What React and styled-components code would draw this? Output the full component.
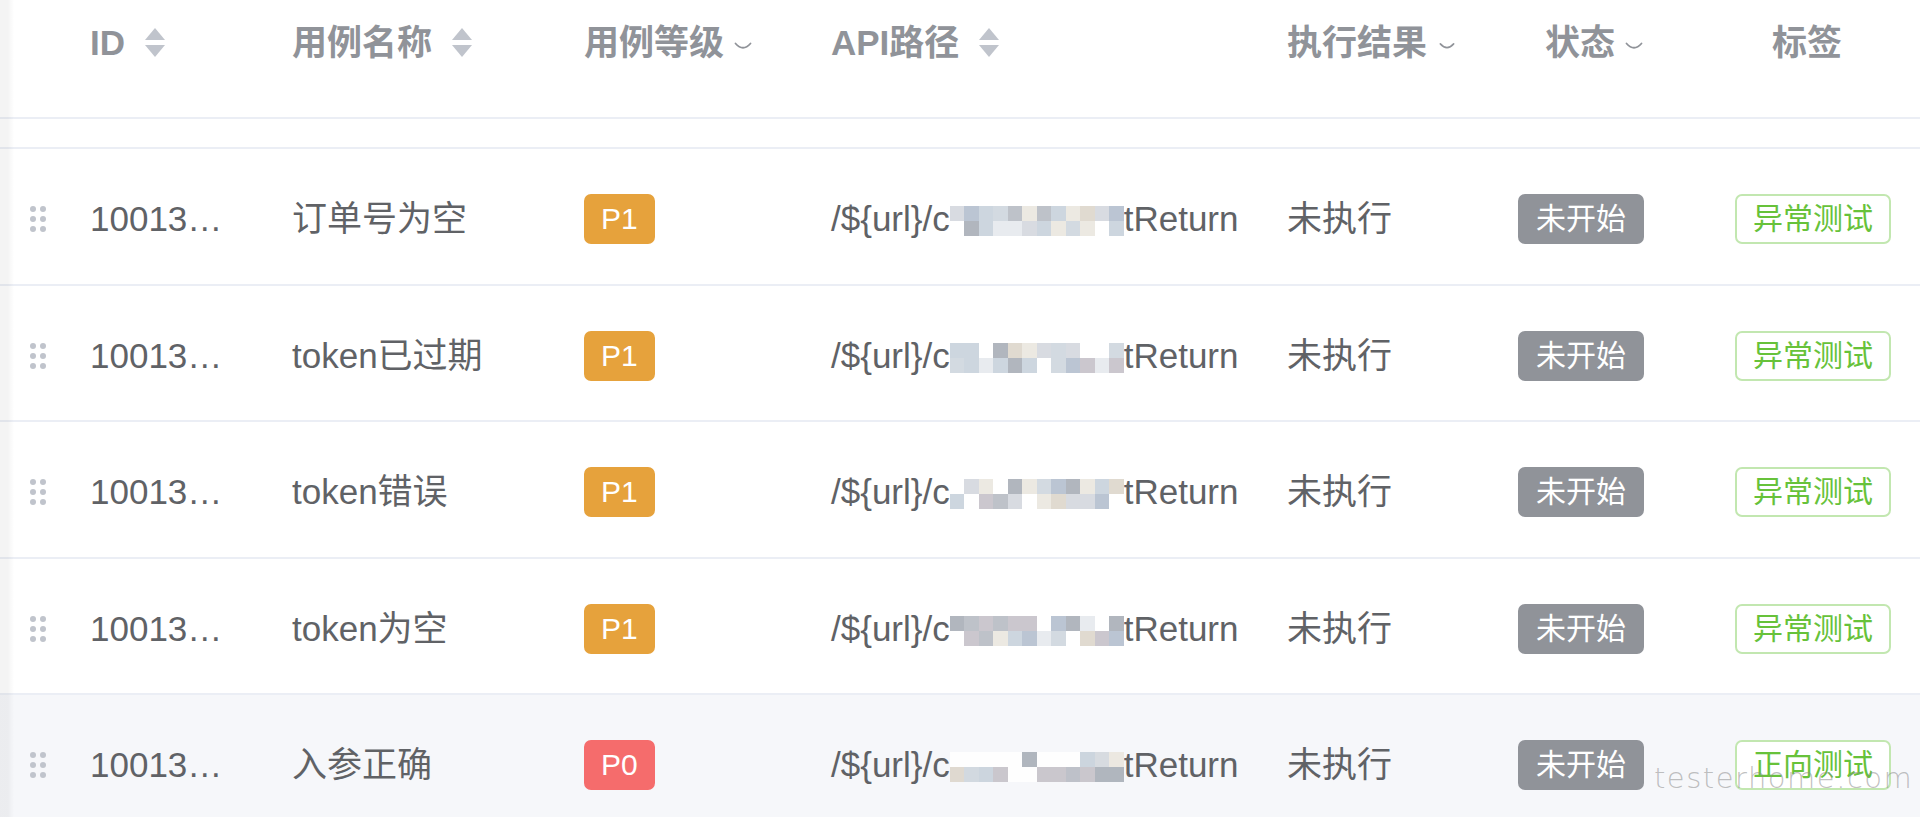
import React from 'react';
import styled, { createGlobalStyle } from 'styled-components';

const GlobalStyle = createGlobalStyle`
  html, body {
    margin: 0;
    padding: 0;
    background: #fff;
    overflow: hidden;
  }
`;

const COLS = '65px 202px 292px 247px 456px 218px 202px 262px';

const Page = styled.div`
  position: relative;
  width: 1944px;
  height: 817px;
  overflow: hidden;
  font-family: 'Liberation Sans', 'Noto Sans CJK SC', sans-serif;
  font-size: 35px;
  color: #606266;
  &::before {
    content: '';
    position: absolute;
    left: 0;
    top: 0;
    bottom: 0;
    width: 14px;
    background: linear-gradient(to right, rgba(0, 0, 0, 0.045) 0, rgba(0, 0, 0, 0.045) 8px, rgba(0, 0, 0, 0) 14px);
    z-index: 2;
  }
`;

const HeaderRow = styled.div`
  display: grid;
  grid-template-columns: ${COLS};
  align-items: center;
  height: 119px;
  padding-bottom: 32px;
  box-sizing: border-box;
  border-bottom: 2px solid #ebeef5;
`;

const HeadCell = styled.div`
  display: flex;
  align-items: center;
  justify-content: ${(p) => (p.center ? 'center' : 'flex-start')};
  gap: ${(p) => p.gap || 20}px;
  padding: 0 25px 0 ${(p) => 25 + (p.shift || 0)}px;
  font-weight: 700;
  color: #909399;
  line-height: 44px;
  white-space: nowrap;
`;

const Spacer = styled.div`
  height: 28px;
  border-bottom: 2px solid #ebeef5;
`;

const Row = styled.div`
  display: grid;
  grid-template-columns: ${COLS};
  align-items: center;
  height: 136.5px;
  padding-top: 6px;
  box-sizing: border-box;
  border-bottom: 2px solid #ebeef5;
  background: ${(p) => (p.$hover ? '#f6f7fa' : '#fff')};
`;

const Cell = styled.div`
  display: flex;
  align-items: center;
  justify-content: ${(p) => (p.center ? 'center' : 'flex-start')};
  padding: 0 25px;
  white-space: nowrap;
  overflow: hidden;
  line-height: 44px;
`;

const HandleCell = styled.div`
  display: flex;
  align-items: center;
  padding-left: 29px;
`;

const Tag = styled.span`
  display: inline-flex;
  align-items: center;
  justify-content: center;
  height: 50px;
  padding: 0 ${(p) => p.pad || 15}px;
  box-sizing: border-box;
  border-radius: 7px;
  font-size: 30px;
  line-height: 1;
  border: 2px solid ${(p) => p.border};
  background: ${(p) => p.bg};
  color: ${(p) => p.color};
`;

const PathText = styled.div`
  display: flex;
  align-items: center;
`;

const Mosaic = styled.span`
  display: grid;
  grid-template-columns: repeat(12, 14.5px);
  grid-template-rows: 15px 15px;
  width: 174px;
  height: 30px;
  margin-top: 4px;
  opacity: 0.9;
`;

const Block = styled.span`
  display: block;
`;

const ChevronSvg = styled.svg`
  margin-top: 9px;
`;

const Watermark = styled.div`
  position: absolute;
  left: 1654px;
  top: 758px;
  font-family: 'DejaVu Sans', sans-serif;
  font-weight: 200;
  font-size: 29px;
  line-height: 40px;
  letter-spacing: 1.5px;
  color: rgba(140, 140, 140, 0.55);
  z-index: 3;
  pointer-events: none;
`;

const SortIcon = () => (
  <svg width="20" height="30" viewBox="0 0 20 30">
    <polygon points="10,0 20,12 0,12" fill="#c0c4cc" />
    <polygon points="0,17 20,17 10,29" fill="#c0c4cc" />
  </svg>
);

const Chevron = () => (
  <ChevronSvg width="18" height="10" viewBox="0 0 18 10">
    <path d="M1.5 1.5 Q9 10 16.5 1.5" fill="none" stroke="#909399" strokeWidth="1.8" strokeLinecap="round" />
  </ChevronSvg>
);

const Handle = () => (
  <svg width="18" height="30" viewBox="0 0 18 30">
    {[5, 15, 25].map((y) =>
      [4, 14].map((x) => <circle key={`${x}-${y}`} cx={x} cy={y} r="3" fill="#c0c4cc" />)
    )}
  </svg>
);

const PALETTE = ['#ffffff', '#cfd6de', '#b8bcc4', '#c8d2dc', '#ddd6cc', '#e6e9ee', '#a9afb8', '#d4d8de', '#c6c2c9', '#ebe7df', '#b4bfcf', '#ffffff'];

const mosaicColors = (seed) => {
  const out = [];
  let s = seed;
  for (let i = 0; i < 24; i += 1) {
    s = (s * 9301 + 49297) % 233280;
    out.push(PALETTE[Math.floor((s / 233280) * PALETTE.length)]);
  }
  return out;
};

const rows = [
  { name: '订单号为空', level: 'P1', tag: '异常测试', seed: 11 },
  { name: 'token已过期', level: 'P1', tag: '异常测试', seed: 27 },
  { name: 'token错误', level: 'P1', tag: '异常测试', seed: 43 },
  { name: 'token为空', level: 'P1', tag: '异常测试', seed: 58 },
  { name: '入参正确', level: 'P0', tag: '正向测试', seed: 71, hover: true },
];

const levelColor = { P0: '#f56c6c', P1: '#e6a23c' };

const App = () => (
  <>
    <GlobalStyle />
    <Page>
      <HeaderRow>
        <div />
        <HeadCell>
          ID <SortIcon />
        </HeadCell>
        <HeadCell gap={20}>
          用例名称 <SortIcon />
        </HeadCell>
        <HeadCell gap={10}>
          用例等级 <Chevron />
        </HeadCell>
        <HeadCell>
          API路径 <SortIcon />
        </HeadCell>
        <HeadCell gap={12}>
          执行结果 <Chevron />
        </HeadCell>
        <HeadCell center gap={10} shift={26}>
          状态 <Chevron />
        </HeadCell>
        <HeadCell center shift={-12}>标签</HeadCell>
      </HeaderRow>
      <Spacer />
      {rows.map((row, index) => (
        <Row key={row.name + index} $hover={row.hover}>
          <HandleCell>
            <Handle />
          </HandleCell>
          <Cell>10013…</Cell>
          <Cell>{row.name}</Cell>
          <Cell>
            <Tag bg={levelColor[row.level]} border={levelColor[row.level]} color="#fff">
              {row.level}
            </Tag>
          </Cell>
          <Cell>
            <PathText>
              {'/${url}/c'}
              <Mosaic>
                {mosaicColors(row.seed).map((c, i) => (
                  <Block key={i} style={{ background: c }} />
                ))}
              </Mosaic>
              tReturn
            </PathText>
          </Cell>
          <Cell>未执行</Cell>
          <Cell center>
            <Tag pad={16} bg="#909399" border="#909399" color="#fff">
              未开始
            </Tag>
          </Cell>
          <Cell center>
            <Tag pad={16} bg="#fff" border="#c2e7b0" color="#67c23a">
              {row.tag}
            </Tag>
          </Cell>
        </Row>
      ))}
      <Watermark>testerhome.com</Watermark>
    </Page>
  </>
);

export default App;
